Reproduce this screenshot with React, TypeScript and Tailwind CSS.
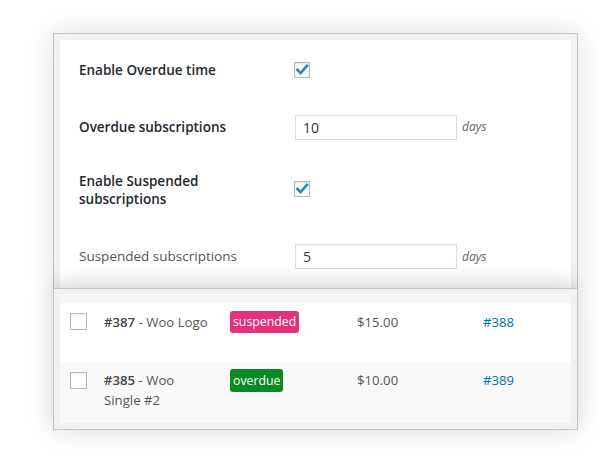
import React from "react";

const Check = () => (
  <div className="w-[16px] h-[16px] border border-[#b4b9be] bg-[#fbfbfb] shadow-[inset_0_1px_2px_rgba(0,0,0,0.1)] flex items-center justify-center">
    <svg width="14" height="14" viewBox="0 0 20 20">
      <path d="M3.5 10 L8 14.5 L17 4" fill="none" stroke="#1e8cbe" strokeWidth="3.8" strokeLinecap="square" />
    </svg>
  </div>
);

const Box = () => (
  <div className="w-[17px] h-[17px] border border-[#b4b9be] bg-white shadow-[inset_0_1px_2px_rgba(0,0,0,0.07)]" />
);

const Input = ({ value }: { value: string }) => (
  <div className="flex items-center">
    <div className="w-[162px] h-[25px] border border-[#dddddd] bg-white shadow-[inset_0_1px_2px_rgba(0,0,0,0.07)] pl-[7px] flex items-center text-[14px] text-[#32373c]">
      {value}
    </div>
    <span className="ml-[5px] italic text-[12px] text-[#666]">days</span>
  </div>
);

export default function App() {
  return (
    <div
      className="w-[600px] h-[467px] bg-white overflow-hidden pt-[33px]"
      style={{ fontFamily: '"Open Sans", "Noto Sans", sans-serif' }}
    >
      <div className="ml-[53px] w-[525px] h-[255px] border border-b-0 border-[#c3c3c3] bg-[#f1f1f1] pt-[6px] px-[6px] shadow-[0_0_28px_rgba(0,0,0,0.13)]">
        <div className="bg-white h-full pl-[19px]">
          <div className="h-[60px] flex items-center">
            <div className="w-[215px] text-[13.5px] font-[550] text-[#23282d]">Enable Overdue time</div>
            <Check />
          </div>
          <div className="h-[54px] flex items-center">
            <div className="w-[216px] text-[13.5px] font-[550] text-[#23282d]">Overdue subscriptions</div>
            <Input value="10" />
          </div>
          <div className="h-[70px] flex items-center">
            <div className="w-[215px] text-[13.5px] leading-[18px] pt-[2px] font-[550] text-[#23282d]">
              Enable Suspended
              <br />
              subscriptions
            </div>
            <Check />
          </div>
          <div className="h-[65px] flex items-center">
            <div className="w-[216px] text-[13.5px] text-[#50575e]">Suspended subscriptions</div>
            <Input value="5" />
          </div>
        </div>
      </div>
      <div className="relative ml-[53px] w-[525px] border border-[#c3c3c3] bg-[#f1f1f1] pt-[5px] px-[6px] pb-[6px] shadow-[0_-6px_14px_rgba(0,0,0,0.07),0_0_28px_rgba(0,0,0,0.13)]">
        <div className="h-[9px] bg-[#f6f6f6]" />
        <div className="h-[59px] bg-white flex items-start text-[13.2px] leading-[20px] text-[#555]">
          <div className="w-[44px] pl-[10px] pt-[10px]">
            <Box />
          </div>
          <div className="w-[126px] pr-[17px] pt-[9px]">
            <span className="font-[550] text-[#444]">#387</span> - Woo Logo
          </div>
          <div className="w-[127px] pt-[8px]">
            <span className="inline-block bg-[#e5307c] text-white text-[12.3px] rounded-[3px] px-[3px] h-[22px] leading-[22px]">suspended</span>
          </div>
          <div className="w-[126px] pt-[9px]">$15.00</div>
          <div className="pt-[9px] text-[#0073aa]">#388</div>
        </div>
        <div className="h-[61px] bg-[#f9f9f9] flex items-start text-[13.2px] leading-[20px] text-[#555]">
          <div className="w-[44px] pl-[10px] pt-[10px]">
            <Box />
          </div>
          <div className="w-[126px] pr-[17px] pt-[8px]">
            <span className="font-[550] text-[#444]">#385</span> - Woo Single #2
          </div>
          <div className="w-[127px] pt-[7px]">
            <span className="inline-block bg-[#0a8a23] text-white text-[12.3px] rounded-[3px] px-[3px] h-[23px] leading-[23px]">overdue</span>
          </div>
          <div className="w-[126px] pt-[8px]">$10.00</div>
          <div className="pt-[8px] text-[#0073aa]">#389</div>
        </div>
      </div>
    </div>
  );
}
